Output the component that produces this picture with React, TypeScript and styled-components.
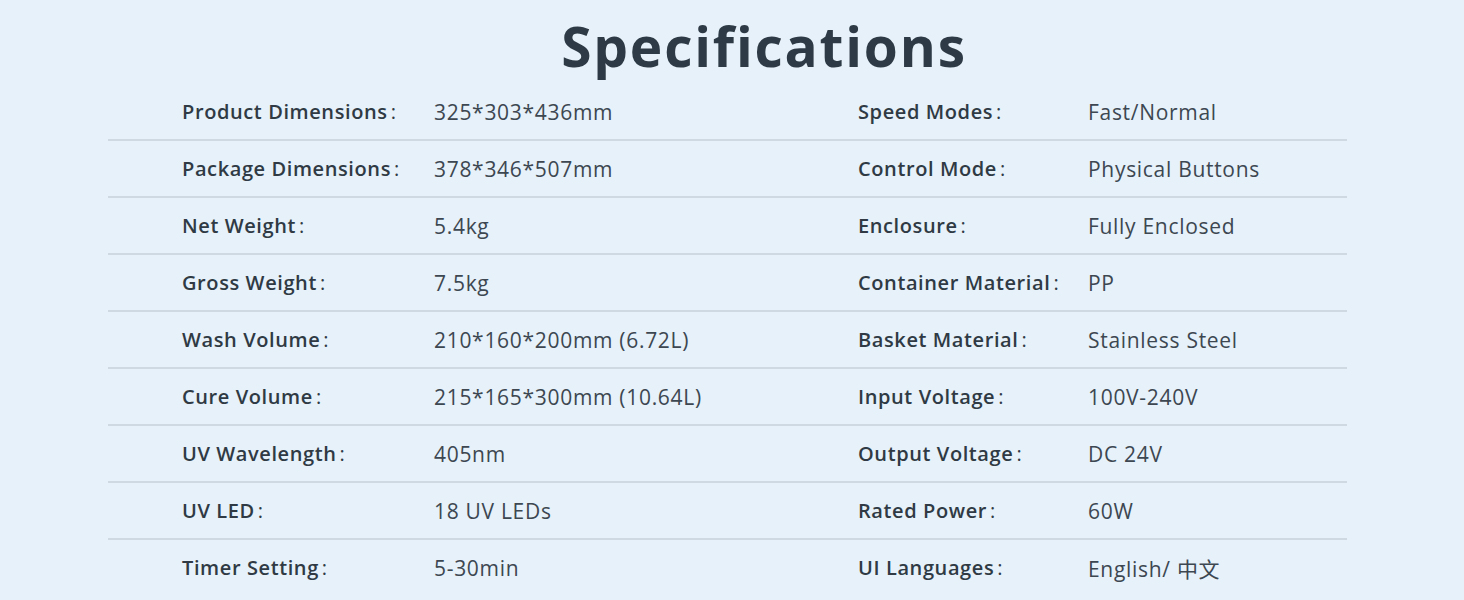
import React from "react";
import styled, { createGlobalStyle } from "styled-components";

const Global = createGlobalStyle`
  html, body { margin: 0; padding: 0; background: #e6f1fa; }
  body { font-family: "Open Sans", "Noto Sans CJK SC", sans-serif; }
`;

const Page = styled.div`
  width: 1464px;
  height: 600px;
  background: #e6f1fa;
  overflow: hidden;
  display: flex;
  flex-direction: column;
`;

const Title = styled.h1`
  margin: 0;
  height: 84px;
  display: flex;
  align-items: center;
  justify-content: center;
  font-family: "Open Sans", sans-serif;
  font-weight: 700;
  font-size: 55px;
  color: #2e3a45;
  letter-spacing: 1.8px;
  padding: 6px 0 0 64px;
  box-sizing: border-box;
`;

const Table = styled.div`
  margin-left: 108px;
  width: 1239px;
  display: flex;
  flex-direction: column;
`;

const Row = styled.div<{ $last?: boolean }>`
  display: grid;
  grid-template-columns: 74px 252px 424px 230px 1fr;
  align-items: center;
  height: 57px;
  box-sizing: border-box;
  border-bottom: ${(p) => (p.$last ? "none" : "2px solid #ced9e2")};
  padding-bottom: ${(p) => (p.$last ? "2px" : "0")};
`;

const Label = styled.span`
  font-size: 20px;
  font-weight: 600;
  color: #2f3a44;
  white-space: nowrap;
  letter-spacing: 0.6px;
`;

const Colon = styled.span`
  margin-left: 3px;
  font-weight: 500;
`;

const Value = styled.span`
  font-size: 21px;
  font-weight: 400;
  color: #3d4751;
  white-space: nowrap;
  letter-spacing: 0.7px;
`;

const rows: [string, string, string, string][] = [
  ["Product Dimensions", "325*303*436mm", "Speed Modes", "Fast/Normal"],
  ["Package Dimensions", "378*346*507mm", "Control Mode", "Physical Buttons"],
  ["Net Weight", "5.4kg", "Enclosure", "Fully Enclosed"],
  ["Gross Weight", "7.5kg", "Container Material", "PP"],
  ["Wash Volume", "210*160*200mm (6.72L)", "Basket Material", "Stainless Steel"],
  ["Cure Volume", "215*165*300mm (10.64L)", "Input Voltage", "100V-240V"],
  ["UV Wavelength", "405nm", "Output Voltage", "DC 24V"],
  ["UV LED", "18 UV LEDs", "Rated Power", "60W"],
  ["Timer Setting", "5-30min", "UI Languages", "English/ 中文"],
];

export default function App() {
  return (
    <Page>
      <Global />
      <Title>Specifications</Title>
      <Table>
        {rows.map((r, i) => (
          <Row key={r[0]} $last={i === rows.length - 1}>
            <span />
            <Label>
              {r[0]}
              <Colon>:</Colon>
            </Label>
            <Value>{r[1]}</Value>
            <Label>
              {r[2]}
              <Colon>:</Colon>
            </Label>
            <Value>{r[3]}</Value>
          </Row>
        ))}
      </Table>
    </Page>
  );
}
